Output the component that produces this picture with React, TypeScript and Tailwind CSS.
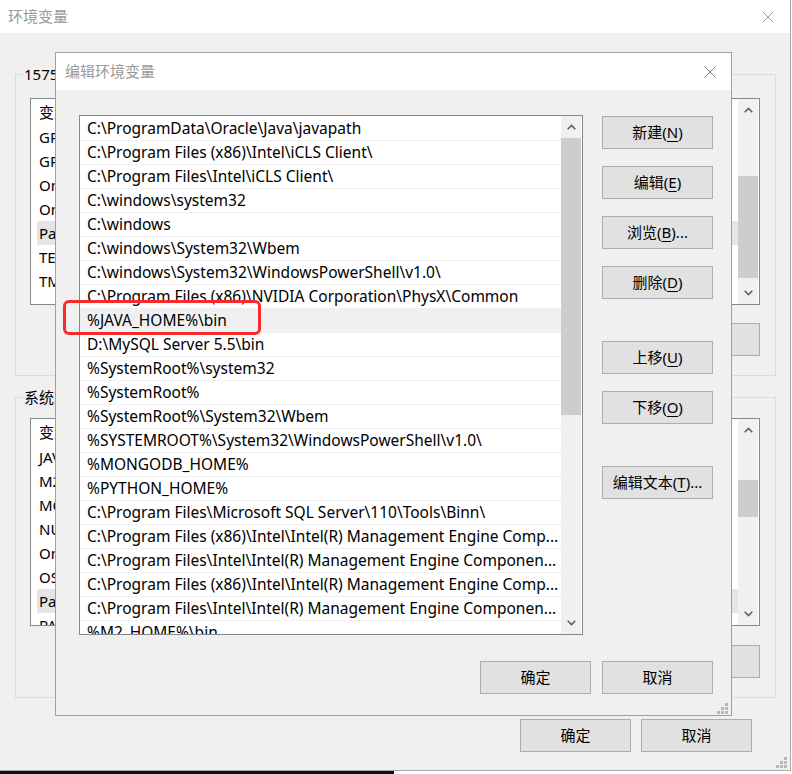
import React from 'react';

const pathRows = [
  'C:\\ProgramData\\Oracle\\Java\\javapath',
  'C:\\Program Files (x86)\\Intel\\iCLS Client\\',
  'C:\\Program Files\\Intel\\iCLS Client\\',
  'C:\\windows\\system32',
  'C:\\windows',
  'C:\\windows\\System32\\Wbem',
  'C:\\windows\\System32\\WindowsPowerShell\\v1.0\\',
  'C:\\Program Files (x86)\\NVIDIA Corporation\\PhysX\\Common',
  '%JAVA_HOME%\\bin',
  'D:\\MySQL Server 5.5\\bin',
  '%SystemRoot%\\system32',
  '%SystemRoot%',
  '%SystemRoot%\\System32\\Wbem',
  '%SYSTEMROOT%\\System32\\WindowsPowerShell\\v1.0\\',
  '%MONGODB_HOME%',
  '%PYTHON_HOME%',
  'C:\\Program Files\\Microsoft SQL Server\\110\\Tools\\Binn\\',
  'C:\\Program Files (x86)\\Intel\\Intel(R) Management Engine Comp...',
  'C:\\Program Files\\Intel\\Intel(R) Management Engine Componen...',
  'C:\\Program Files (x86)\\Intel\\Intel(R) Management Engine Comp...',
  'C:\\Program Files\\Intel\\Intel(R) Management Engine Componen...',
  '%M2_HOME%\\bin',
];

const userVars = ['GPU_DEVICE', 'GPU_MODE', 'OneDrive', 'OneDriveConsumer', 'Path', 'TEMP', 'TMP'];
const sysVars = ['JAVA_HOME', 'M2_HOME', 'MONGODB_HOME', 'NUMBER_OF_PROCESSORS', 'OnlineServices', 'OS', 'Path', 'PATHEXT'];

function Chevron({ up }: { up?: boolean }) {
  return (
    <svg width="9" height="6" viewBox="0 0 9 6" className="block">
      <path
        d={up ? 'M0.7 5.2 L4.5 1.4 L8.3 5.2' : 'M0.7 0.8 L4.5 4.6 L8.3 0.8'}
        fill="none"
        stroke="#606060"
        strokeWidth="1.6"
      />
    </svg>
  );
}

function CloseX({ color }: { color: string }) {
  return (
    <svg width="12" height="12" viewBox="0 0 12 12" className="block">
      <path d="M0.5 0.5 L11.5 11.5 M11.5 0.5 L0.5 11.5" stroke={color} strokeWidth="1" fill="none" />
    </svg>
  );
}

function Grip() {
  return (
    <svg width="11" height="11" viewBox="0 0 11 11" className="block">
      <g fill="#b8b8b8">
        <rect x="8" y="0" width="3" height="3" />
        <rect x="4" y="4" width="3" height="3" />
        <rect x="8" y="4" width="3" height="3" />
        <rect x="0" y="8" width="3" height="3" />
        <rect x="4" y="8" width="3" height="3" />
        <rect x="8" y="8" width="3" height="3" />
      </g>
    </svg>
  );
}

function Btn({ children, className = '' }: { children: React.ReactNode; className?: string }) {
  return (
    <div
      className={`h-[33px] w-[111px] bg-[#e1e1e1] border border-[#adadad] flex items-center justify-center text-[15px] text-black ${className}`}
    >
      {children}
    </div>
  );
}

const U = ({ c }: { c: string }) => <span className="underline underline-offset-[3px] decoration-1">{c}</span>;

function VarList({ rows, selected, height, thumbTop, thumbH }: { rows: string[]; selected: number; height: number; thumbTop: number; thumbH: number }) {
  return (
    <div className="bg-white border border-[#828790] flex overflow-hidden" style={{ height }}>
      <div className="flex-1 flex flex-col pl-[6px]">
        <div className="h-[26px] shrink-0 flex items-center text-[15px]">
          <span className="w-[260px] pl-[2px]">变量</span>
          <span className="pl-[2px]">值</span>
        </div>
        {rows.map((r, i) => (
          <div
            key={i}
            className={`h-[24px] shrink-0 flex items-center text-[15px] whitespace-nowrap ${i === selected ? 'bg-[#e5e5e5]' : ''}`}
          >
            <span className="w-[260px] pl-[2px] overflow-hidden">{r}</span>
          </div>
        ))}
      </div>
      <div className="w-[20px] mr-[1px] bg-[#f0f0f0] flex flex-col items-center shrink-0">
        <div className="h-[22px] flex items-center justify-center shrink-0">
          <Chevron up />
        </div>
        <div className="w-full shrink-0" style={{ height: thumbTop }} />
        <div className="w-full bg-[#cdcdcd] shrink-0" style={{ height: thumbH }} />
        <div className="flex-1" />
        <div className="h-[22px] flex items-center justify-center shrink-0">
          <Chevron />
        </div>
      </div>
    </div>
  );
}

export default function App() {
  return (
    <div className="w-[792px] h-[774px] bg-white relative overflow-hidden font-[Noto_Sans,Noto_Sans_CJK_SC,sans-serif] text-black">
      {/* background window: 环境变量 */}
      <div className="w-[791px] h-[771px] border-r border-b border-[#a8a8a8] bg-[#f0f0f0] flex flex-col relative">
        <div className="h-[33px] bg-white flex items-center justify-between pl-[8px] pr-[16px] shrink-0">
          <span className="text-[15px] text-[#999999]">环境变量</span>
          <CloseX color="#9a9a9a" />
        </div>
        <div className="flex-1 pl-[15px] pr-[14px] flex flex-col">
          <fieldset className="mt-[31px] border border-[#dcdcdc] p-0 m-0">
            <legend className="ml-[7px] px-[1px] text-[15px] leading-[20px]">15755 的用户变量(U)</legend>
            <div className="pl-[14px] pr-[15px] pt-[14px] pb-[19px] flex flex-col">
              <VarList rows={userVars} selected={4} height={207} thumbTop={55} thumbH={102} />
              <div className="mt-[18px] flex justify-end gap-[10px]">
                <Btn>新建(<U c="N" />)...</Btn>
                <Btn>编辑(<U c="E" />)...</Btn>
                <Btn>删除(<U c="D" />)</Btn>
              </div>
            </div>
          </fieldset>
          <fieldset className="mt-[11px] border border-[#dcdcdc] p-0 m-0">
            <legend className="ml-[7px] px-[1px] text-[15px] leading-[20px]">系统变量(S)</legend>
            <div className="pl-[14px] pr-[15px] pt-[11px] pb-[19px] flex flex-col">
              <VarList rows={sysVars} selected={6} height={208} thumbTop={39} thumbH={37} />
              <div className="mt-[19px] flex justify-end gap-[10px]">
                <Btn>新建(<U c="W" />)...</Btn>
                <Btn>编辑(<U c="I" />)...</Btn>
                <Btn>删除(<U c="L" />)</Btn>
              </div>
            </div>
          </fieldset>
          <div className="mt-[21px] flex justify-end gap-[10px] pr-[24px]">
            <Btn>确定</Btn>
            <Btn>取消</Btn>
          </div>
        </div>
        <div className="absolute right-[3px] bottom-[2px]">
          <Grip />
        </div>
      </div>
      <div className="h-[3px] flex">
        <div className="w-[394px] bg-[#111111]" />
      </div>

      {/* foreground dialog: 编辑环境变量 */}
      <div className="absolute left-[55px] top-[52px] w-[677px] h-[664px] border border-[#a0a0a0] bg-[#f0f0f0] flex flex-col">
        <div className="h-[37px] bg-white flex items-center justify-between pl-[9px] pr-[15px] shrink-0">
          <span className="text-[15px] text-[#999999]">编辑环境变量</span>
          <CloseX color="#808080" />
        </div>
        <div className="flex-1 flex flex-col pl-[23px] pr-[18px] pt-[25px]">
          <div className="flex items-start">
            <div className="w-[504px] h-[520px] bg-white border border-[#828790] flex overflow-hidden">
              <div className="flex-1 flex flex-col pt-[1px]">
                {pathRows.map((r, i) => (
                  <div
                    key={i}
                    className={`h-[24px] shrink-0 flex items-center pl-[7px] text-[15.5px] whitespace-nowrap overflow-hidden border-b border-[#f0f0f0] ${i === 8 ? 'bg-[#f0f0f0]' : ''}`}
                  >
                    {r}
                  </div>
                ))}
              </div>
              <div className="w-[20px] mr-[1px] bg-[#f0f0f0] flex flex-col items-center shrink-0">
                <div className="h-[22px] flex items-center justify-center shrink-0">
                  <Chevron up />
                </div>
                <div className="w-full h-[277px] bg-[#cdcdcd] shrink-0" />
                <div className="flex-1" />
                <div className="h-[22px] flex items-center justify-center shrink-0">
                  <Chevron />
                </div>
              </div>
            </div>
            <div className="ml-[19px] pt-[1px] flex flex-col">
              <Btn>新建(<U c="N" />)</Btn>
              <Btn className="mt-[17px]">编辑(<U c="E" />)</Btn>
              <Btn className="mt-[17px]">浏览(<U c="B" />)...</Btn>
              <Btn className="mt-[17px]">删除(<U c="D" />)</Btn>
              <Btn className="mt-[42px]">上移(<U c="U" />)</Btn>
              <Btn className="mt-[17px]">下移(<U c="O" />)</Btn>
              <Btn className="mt-[42px]">编辑文本(<U c="T" />)...</Btn>
            </div>
          </div>
          <div className="mt-[26px] flex justify-end gap-[11px]">
            <Btn>确定</Btn>
            <Btn>取消</Btn>
          </div>
        </div>
        <div className="absolute right-[3px] bottom-[1px]">
          <Grip />
        </div>
        {/* red annotation box */}
        <div className="absolute left-[7px] top-[247px] w-[198px] h-[35px] border-[3px] border-[#f82a2a] rounded-[6px]" />
      </div>
    </div>
  );
}
